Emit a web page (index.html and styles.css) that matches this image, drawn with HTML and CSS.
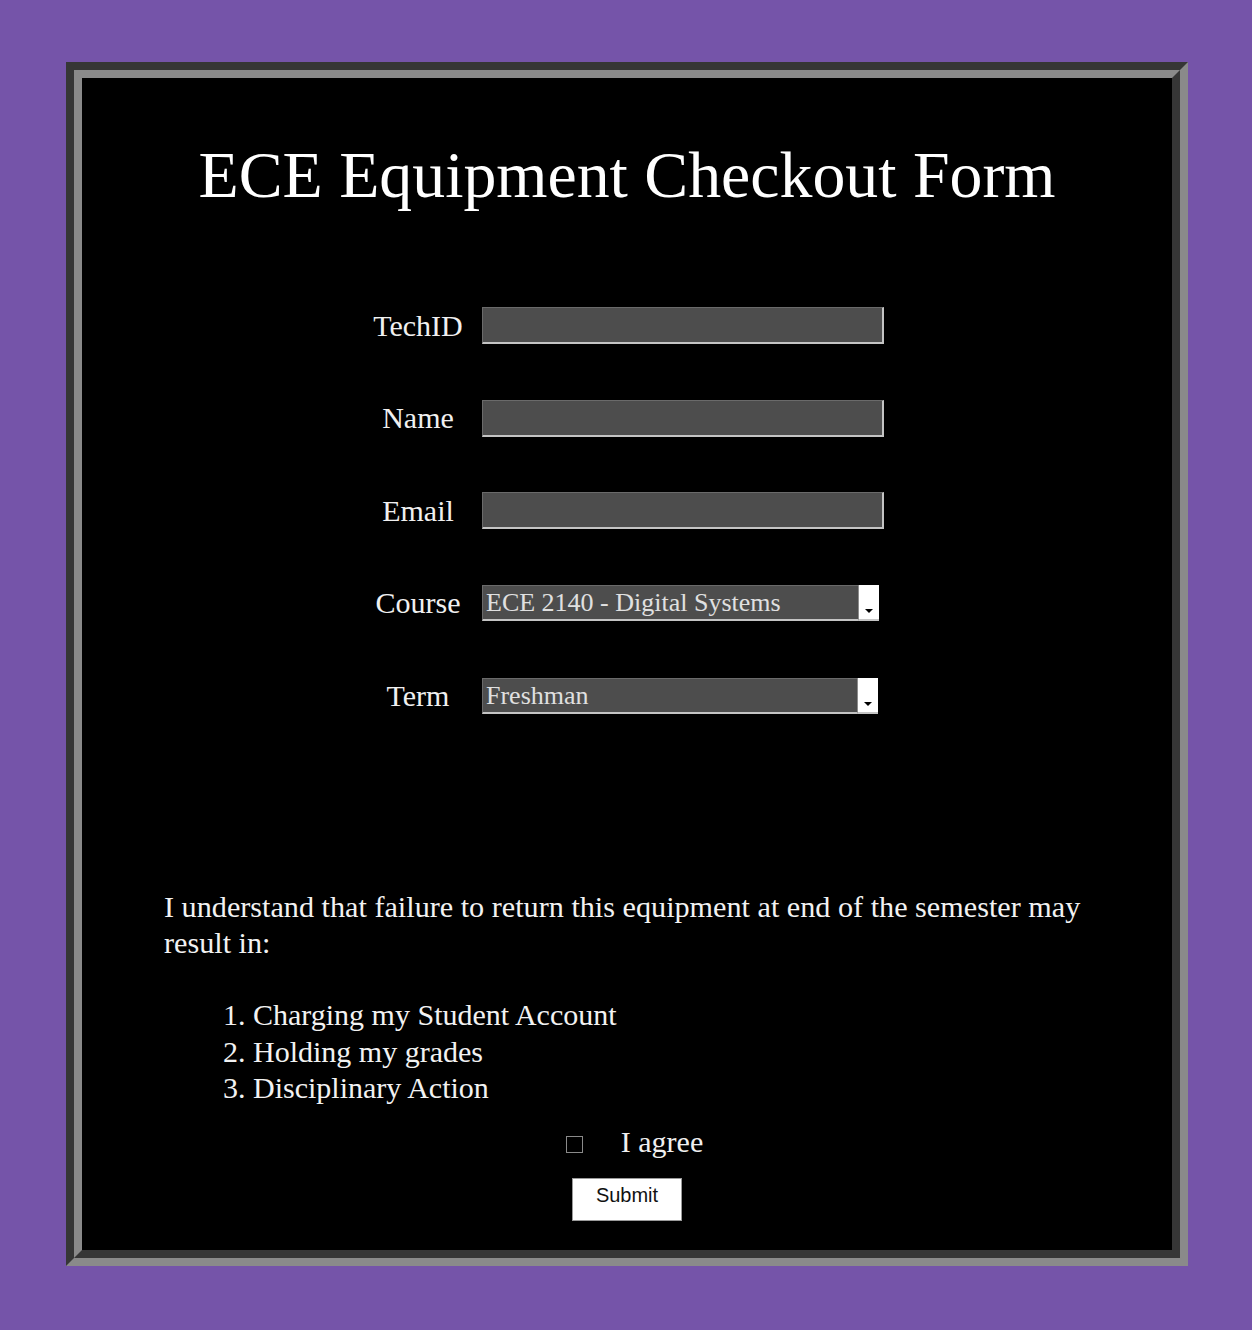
FILE: index.html
```html
<!DOCTYPE html>
<html lang="en">
<head>
<meta charset="utf-8">
<title>ECE Equipment Checkout Form</title>
<link rel="stylesheet" href="styles.css">
</head>
<body>
<main class="frame">
  <h1 class="title">ECE Equipment Checkout Form</h1>
  <form class="form">
    <div class="fields">
      <label class="lbl" for="techid">TechID</label>
      <input class="txt" id="techid" type="text">
      <label class="lbl" for="name">Name</label>
      <input class="txt" id="name" type="text">
      <label class="lbl" for="email">Email</label>
      <input class="txt" id="email" type="text">
      <label class="lbl" for="course">Course</label>
      <span class="sel-wrap sel-course"><select class="sel" id="course"><option>ECE 2140 - Digital Systems</option></select></span>
      <label class="lbl" for="term">Term</label>
      <span class="sel-wrap sel-term"><select class="sel" id="term"><option>Freshman</option></select></span>
    </div>
    <p class="notice">I understand that failure to return this equipment at end of the semester may result in:</p>
    <ol class="conseq">
      <li>Charging my Student Account</li>
      <li>Holding my grades</li>
      <li>Disciplinary Action</li>
    </ol>
    <div class="agree">
      <input class="chk" id="agree" type="checkbox">
      <label class="agree-lbl" for="agree">I agree</label>
    </div>
    <div class="actions">
      <button class="submit" type="button">Submit</button>
    </div>
  </form>
</main>
</body>
</html>
```
FILE: styles.css
```css
html, body {
  margin: 0;
  padding: 0;
}
body {
  background: #7554a9;
  font-family: "Liberation Serif", "Times New Roman", serif;
  color: #f2f2f2;
  padding: 62px 0 64px;
}
.frame {
  box-sizing: border-box;
  width: 1122px;
  height: 1204px;
  margin: 0 0 0 66px;
  background: #000;
  border: 16px groove #8a8a8a;
  overflow: hidden;
}
.title {
  margin: 59px 0 0;
  font-weight: normal;
  font-size: 65.8px;
  line-height: 76px;
  text-align: center;
  color: #fff;
}
.form {
  margin: 0;
}
.fields {
  display: grid;
  grid-template-columns: 112px 402px;
  grid-auto-rows: 37px;
  column-gap: 8px;
  row-gap: 55.5px;
  justify-content: center;
  margin: 94px 8px 0 0;
  align-items: center;
}
.lbl {
  font-size: 30px;
  text-align: center;
  line-height: 36px;
  color: #f0f0f0;
}
.txt {
  box-sizing: border-box;
  width: 402px;
  height: 37px;
  margin: 0;
  background: #4d4d4d;
  border-style: solid;
  border-width: 1px 2px 2px 1px;
  border-color: #6a6a6a #c4c4c4 #c4c4c4 #6a6a6a;
  color: #ddd;
  font-family: inherit;
  font-size: 26px;
}
.sel-wrap {
  position: relative;
  display: block;
  height: 36px;
}
.sel-course { width: 397px; }
.sel-term { width: 396px; }
.sel {
  -webkit-appearance: none;
  appearance: none;
  box-sizing: border-box;
  width: 100%;
  height: 36px;
  margin: 0;
  padding: 0 24px 0 3px;
  background: #4d4d4d;
  border-style: solid;
  border-width: 1px 2px 2px 1px;
  border-color: #6a6a6a #c4c4c4 #c4c4c4 #6a6a6a;
  border-radius: 0;
  color: #e0e0e0;
  font-family: "Liberation Serif", "Times New Roman", serif;
  font-size: 26px;
  line-height: 33px;
}
.sel-wrap::after {
  content: "";
  position: absolute;
  top: 0;
  right: 0;
  width: 21px;
  height: 36px;
  box-sizing: border-box;
  background: #fff;
  border-left: 1px solid #8c8c8c;
  border-bottom: 2px solid #c4c4c4;
  pointer-events: none;
}
.sel-wrap::before {
  content: "";
  position: absolute;
  right: 6px;
  bottom: 8px;
  width: 0;
  height: 0;
  border-left: 4px solid transparent;
  border-right: 4px solid transparent;
  border-top: 4px solid #000;
  z-index: 1;
  pointer-events: none;
}
.notice {
  margin: 175px 0 0 82px;
  width: 930px;
  font-size: 30.2px;
  line-height: 36px;
}
.conseq {
  margin: 36px 0 0 82px;
  padding: 0 0 0 89px;
  font-size: 30px;
  line-height: 36.5px;
}
.agree {
  display: flex;
  align-items: center;
  justify-content: center;
  gap: 38px;
  margin-top: 20px;
  padding-left: 15px;
  height: 36px;
}
.chk {
  -webkit-appearance: none;
  appearance: none;
  box-sizing: border-box;
  width: 17px;
  height: 17px;
  margin: 0;
  background: #000;
  border: 1px solid #8a8a8a;
}
.agree-lbl {
  font-size: 30px;
  line-height: 36px;
  color: #f0f0f0;
  position: relative;
  top: -3px;
}
.actions {
  display: flex;
  justify-content: center;
  margin-top: 15px;
}
.submit {
  box-sizing: border-box;
  width: 110px;
  height: 43px;
  margin: 0;
  background: #fff;
  border: 1px solid #9a9a9a;
  border-radius: 0;
  font-family: "Liberation Sans", Arial, sans-serif;
  font-size: 20px;
  color: #111;
  padding: 0 0 8px;
}
```
